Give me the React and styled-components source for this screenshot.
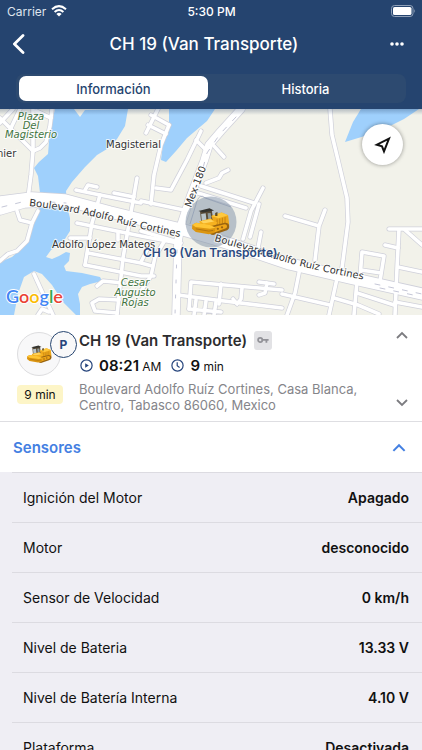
import React, { useState } from "react";
import styled, { createGlobalStyle } from "styled-components";

const GlobalStyle = createGlobalStyle`
  * { box-sizing: border-box; }
  body { margin: 0; font-family: Inter, "Liberation Sans", sans-serif; background: #efeef4; color: #111; }
  button { font: inherit; color: inherit; border: 0; padding: 0; margin: 0; background: none; cursor: pointer; }
  svg { display: block; }
`;

const Screen = styled.div`
  height: 100vh;
  display: flex;
  flex-direction: column;
  overflow: hidden;
`;

const Header = styled.header`
  flex: none;
  background: #25446f;
  color: #fff;
`;

const StatusBar = styled.div`
  display: grid;
  grid-template-columns: 1fr auto 1fr;
  align-items: center;
  height: 22px;
  padding: 0 6px 0 7px;
  font-size: 12px;
`;

const Carrier = styled.span`
  display: flex;
  align-items: center;
  gap: 5px;
  color: #dfe5ee;
`;

const Clock = styled.span`
  font-weight: 500;
`;

const BatterySlot = styled.span`
  justify-self: end;
`;

const NavBar = styled.div`
  display: grid;
  grid-template-columns: 40px 1fr 48px;
  align-items: center;
  height: 44px;
  padding: 0 12px 0 6px;
`;

const NavButton = styled.button`
  display: flex;
  align-items: center;
  justify-content: ${(p) => (p.$end ? "flex-end" : "flex-start")};
  height: 44px;
  padding: 0 6px;
`;

const Title = styled.h1`
  margin: 0;
  text-align: center;
  font-size: 17px;
  font-weight: 500;
  line-height: 24px;
`;

const Segments = styled.div`
  display: flex;
  margin: 8px 16px 6px;
  padding: 2px 3px;
  height: 29px;
  border-radius: 8px;
  background: #2d4a70;
`;

const Segment = styled.button`
  flex: ${(p) => (p.$active ? "1 1 0" : "1 1 6px")};
  border-radius: 7px;
  font-size: 13px;
  font-weight: 500;
  background: ${(p) => (p.$active ? "#fff" : "transparent")};
  color: ${(p) => (p.$active ? "#25446f" : "#fff")};
`;

const MapArea = styled.section`
  position: relative;
  flex: none;
  height: 206px;
`;

const LocateButton = styled.button`
  position: absolute;
  top: 15px;
  right: 19px;
  width: 41px;
  height: 41px;
  display: grid;
  place-items: center;
  border-radius: 50%;
  background: #fff;
  box-shadow: 0 0 4px rgba(0, 0, 0, 0.4);
`;

const UnitCard = styled.section`
  flex: none;
  display: grid;
  grid-template-columns: 50px 1fr 24px;
  column-gap: 12px;
  padding: 15px 8px 8px 17px;
  background: #fff;
  border-bottom: 1px solid #dedee2;
`;

const UnitAside = styled.div`
  display: flex;
  flex-direction: column;
  align-items: flex-start;
  gap: 9px;
  padding-top: 2px;
`;

const Avatar = styled.div`
  position: relative;
  display: grid;
  place-items: center;
  width: 44px;
  height: 44px;
  border: 1px solid #dddddf;
  border-radius: 50%;
  background: #f8f8f9;
`;

const ParkedBadge = styled.span`
  position: absolute;
  top: -2px;
  right: -17px;
  width: 27px;
  height: 27px;
  display: grid;
  place-items: center;
  border: 1px solid #25446f;
  border-radius: 50%;
  background: #f8f8f9;
  color: #25447c;
  font-size: 12px;
  font-weight: 700;
`;

const DurationTag = styled.span`
  width: 46px;
  height: 19px;
  border-radius: 4px;
  background: #fdf5c7;
  font-size: 12px;
  line-height: 19px;
  text-align: center;
`;

const UnitBody = styled.div`
  min-width: 0;
`;

const UnitName = styled.h2`
  display: flex;
  align-items: center;
  gap: 7px;
  margin: 0;
  height: 20px;
  font-size: 15px;
  font-weight: 600;
  color: #2c2c2e;
`;

const KeyTag = styled.span`
  display: grid;
  place-items: center;
  width: 18px;
  height: 19px;
  border-radius: 3px;
  background: #e2e2e5;
`;

const Times = styled.div`
  display: flex;
  align-items: center;
  gap: 10px;
  height: 20px;
  margin-top: 5px;
  padding-left: 1px;
`;

const TimeItem = styled.span`
  display: flex;
  align-items: center;
  gap: 6px;
  font-size: 12px;
`;

const TimeValue = styled.strong`
  font-size: 15px;
  font-weight: 600;
`;

const Address = styled.p`
  margin: 6px 0 0;
  font-size: 13px;
  line-height: 16px;
  color: #85858a;
`;

const Steppers = styled.div`
  display: flex;
  flex-direction: column;
  justify-content: space-between;
  align-items: center;
  padding-bottom: 5px;
`;

const Stepper = styled.button`
  display: grid;
  place-items: center;
  width: 24px;
  height: 10px;
`;

const Group = styled.section`
  flex: 1;
  min-height: 0;
  display: flex;
  flex-direction: column;
`;

const GroupToggle = styled.button`
  flex: none;
  display: flex;
  align-items: center;
  justify-content: space-between;
  height: 50px;
  padding: 0 16px 0 13px;
  background: #fff;
  color: #4480e2;
  font-size: 15px;
  font-weight: 600;
`;

const SensorList = styled.dl`
  flex: 1;
  min-height: 0;
  margin: 0;
  padding-left: 12px;
  overflow-y: auto;
  scrollbar-width: none;
  background: #efeef4;
`;

const SensorRow = styled.div`
  display: flex;
  align-items: center;
  justify-content: space-between;
  height: 50px;
  padding: 0 13px 0 11px;
  border-top: 1px solid #dcdbe1;
  font-size: 14px;
`;

const SensorName = styled.dt``;

const SensorValue = styled.dd`
  margin: 0;
  font-weight: 600;
`;

const sensors = [
  ["Ignición del Motor", "Apagado"],
  ["Motor", "desconocido"],
  ["Sensor de Velocidad", "0 km/h"],
  ["Nivel de Bateria", "13.33 V"],
  ["Nivel de Batería Interna", "4.10 V"],
  ["Plataforma", "Desactivada"],
];

function Bulldozer(props) {
  return (
    <svg viewBox="0 0 100 72" aria-hidden="true" {...props}>
      <path d="M21 8 L52 5 L57 36 L25 42 Z" fill="#594b37" />
      <path d="M24 15 L36 13 L38 31 L26 34 Z" fill="#b8c3c9" />
      <path d="M41 13 L49 12 L51 29 L43 30 Z" fill="#8f9a9c" />
      <path d="M17 7 L46 0 L58 6 L29 11 Z" fill="#34332f" />
      <path d="M51 20 L78 11 L95 18 L98 43 L61 50 Z" fill="#eda71b" />
      <path d="M51 20 L78 11 L95 18 L70 26 Z" fill="#ffc83d" />
      <path d="M66 29 V46 M73 27 V45 M80 25 V43 M87 23 V41" stroke="#b9780f" strokeWidth="2" />
      <path d="M61 12 L67 10 V20 H61 Z" fill="#5d4a25" />
      <path d="M19 34 L49 27 L67 38 L58 48 L25 47 Z" fill="#f6b11f" />
      <path d="M23 34 L48 29 L58 35 L30 40 Z" fill="#ffd35c" />
      <path d="M45 48 L86 38 Q99 38 98 49 Q98 56 88 59 L56 70 Q46 70 44 61 Z" fill="#9a6510" />
      <path d="M49 51 L86 42 Q93 43 92 49 Q92 52 86 54 L57 64 Q49 64 49 58 Z" fill="#efa518" />
      <g fill="#9a6510"><circle cx="57" cy="57" r="3" /><circle cx="68" cy="54" r="3" /><circle cx="79" cy="50" r="3" /></g>
      <path d="M1 43 L11 38 L46 43 L62 51 L58 65 L44 68 L10 62 L0 54 Z" fill="#dc9611" />
      <path d="M1 43 L11 38 L46 43 L62 51 L47 54 L9 49 Z" fill="#ffc534" />
      <path d="M10 54 L44 60 L56 58" fill="none" stroke="#a66c10" strokeWidth="2" />
    </svg>
  );
}

const water = [
  "M55 109 H74 L80 117 L85 110 L128 109 L125 126 L117 139 L107 149 L97 155 L85 167 L72 182 L66 191 L67 206 L70 218 L70 231 L63 242 L51 250 L46 257 L52 259 L59 256 L66 252 L70 253 L69 261 L64 266 L66 271 L82 273 L100 277 L102 281 L90 284 L82 287 L78 294 L80 304 L80 316 H0 V262 L12 257 L21 249 L29 238 L32 224 L39 208 L40 193 L38 176 L34 168 L39 162 L48 154 L50 130 Z",
  "M169 109 H215 L207 121 L187 138 L176 151 L166 162 L161 160 L163 144 L169 126 Z",
  "M345 142 L353 122 L361 109 H419 L404 119 L378 132 Z",
];

const streets = [
  "M0 118 L20 138 L33 151 L31 175 L28 198",
  "M52 109 L50 126 L46 142 L40 148 L33 151",
  "M33 109 V151",
  "M20 109 L10 130 M0 123 L13 109 M36 111 L51 118",
  "M17 211 L20 220 L32 223 L38 211",
  "M32 223 L27 241 L17 251 L8 254 L0 261",
  "M76 190 L100 195 L141 203",
  "M85 190 L88 185 L97 187",
  "M100 195 L92 223 L85 265",
  "M137 178 L133 201 L123 258 L117 315",
  "M77 223 L141 236 L178 243",
  "M70 238 L90 238 M118 233 V240",
  "M88 253 L141 263 L152 266",
  "M85 265 L141 276 L154 276",
  "M114 193 L134 197",
  "M97 286 L103 281 L123 283",
  "M119 300 L99 299 L92 303 L95 311 L117 313",
  "M34 274 L44 296 L53 315",
  "M38 315 L42 309 L49 312",
  "M201 131 L187 160 L171 190 L156 188",
  "M158 109 L146 133 M151 115 L169 125 M148 125 L166 134",
  "M169 125 L161 145 L154 175 L151 204",
  "M141 201 L184 210",
  "M196 140 L207 151 M214 146 L224 157",
  "M206 183 L219 178 L222 173 L228 170",
  "M201 186 L254 203 M198 193 L246 208",
  "M263 188 L251 211 L243 239 M259 204 L250 237 M261 232 L258 248",
  "M165 240 L155 257 L151 276 L141 291",
  "M141 231 L181 243 M150 244 L141 262",
  "M189 309 L191 282 L282 290",
  "M221 284 L219 304 M178 295 L216 300 L282 308",
  "M196 300 L194 315 M206 301 L204 315 M216 302 L214 315 M189 309 L221 312",
  "M233 299 L237 304 L241 299 L242 288",
  "M259 282 L274 284 M267 283 L265 293 L259 295",
  "M330 109 L332 135 L338 160 L347 198 L348 222 L342 268",
  "M338 274 L329 315",
  "M285 216 L319 226 M325 210 L319 226 L315 260",
  "M360 278 L362 252 L384 256 L380 281 M361 270 L381 273",
  "M389 229 H422 M399 229 L397 268 L395 315",
  "M405 230 L422 245 M385 245 L398 248 M398 267 L422 272",
  "M300 268 L295 293 L287 315",
  "M282 294 L330 305 M357 281 L354 315",
  "M357 293 L394 305 M334 298 L358 305 L379 314",
  "M395 302 L422 307",
];

const avenues = [
  "M0 211 L24 204 L60 202",
  "M241 109 L221 131 L209 145 L204 161 L191 195 L181 225 L178 241 L176 315",
];

const boulevard = "M0 202 L32 198 L65 200 L110 212 L180 229 L215 239 L290 264 L350 278 L422 294";

function CityMap() {
  return (
    <svg
      width="100%"
      height="100%"
      viewBox="0 109 422 206"
      preserveAspectRatio="xMidYMid slice"
      role="img"
      aria-label="Mapa"
    >
      <defs>
        <path id="blvd-west" d="M29 206 Q78 211 125 225 Q155 232 195 240" />
        <path id="blvd-east" d="M214 241 Q250 251 285 262 Q325 273 382 283" />
        <path id="mex" d="M191 208 L209 160" />
        <linearGradient id="top-shade" x1="0" y1="0" x2="0" y2="1">
          <stop offset="0" stopColor="#1d355a" stopOpacity="0.28" />
          <stop offset="1" stopColor="#1d355a" stopOpacity="0" />
        </linearGradient>
      </defs>
      <rect y="109" width="422" height="206" fill="#f2f2ea" />
      {water.map((d) => <path key={d} d={d} fill="#9fd0fc" />)}
      <path d="M34 271 L24 277 L18 294 L14 315 H76 L63 302 L52 285 L42 274 Z" fill="#f2f2ea" />
      <g fill="none" strokeLinecap="round" strokeLinejoin="round">
        <g stroke="#cfd0da">
          {streets.map((d) => <path key={d} d={d} strokeWidth="5" />)}
          {avenues.map((d) => <path key={d} d={d} strokeWidth="9" />)}
          <path d={boulevard} strokeWidth="13" />
        </g>
        <g stroke="#fff">
          {streets.map((d) => <path key={d} d={d} strokeWidth="3.6" />)}
          {avenues.map((d) => <path key={d} d={d} strokeWidth="7.6" />)}
          <path d={boulevard} strokeWidth="11.4" />
        </g>
        <g stroke="#b5b7cb" strokeWidth="0.8" strokeDasharray="5 9">
          <path d="M2 207 L26 201 M50 202 L66 203" />
          <path d="M236 117 L220 134 L207 153 L203 168" />
          <path d="M375 284 L422 294 M380 288 L418 296" />
          <path d="M177 250 L175 315" strokeDasharray="3 12" />
        </g>
      </g>
      <circle cx="211" cy="222" r="25.5" fill="#8797ac" fillOpacity="0.55" />
      <path d="M190 224 L197 201 Q200 193 205 198 L231 207" fill="none" stroke="#6e80a0" strokeWidth="0.7" opacity="0.6" />
      <Bulldozer x="192" y="208" width="38" height="28" />
      <g fontFamily='"DejaVu Sans", "Noto Sans", sans-serif' fontSize="10" fill="#333" stroke="#fff" strokeWidth="2" strokeOpacity="0.75" paintOrder="stroke">
        <text x="106" y="148">Magisterial</text>
        <text x="-3" y="157">nier</text>
        <text x="52" y="248">Adolfo López Mateos</text>
        <g fontStyle="italic" fill="#3f7440" textAnchor="middle">
          <text x="31" y="120">Plaza</text>
          <text x="31" y="129">Del</text>
          <text x="31" y="138">Magisterio</text>
          <text x="135" y="286">Cesar</text>
          <text x="135" y="296">Augusto</text>
          <text x="135" y="306">Rojas</text>
        </g>
        <text><textPath href="#blvd-west">Boulevard Adolfo Ruíz Cortines</textPath></text>
        <text><textPath href="#blvd-east">Boulevard Adolfo Ruíz Cortines</textPath></text>
        <text><textPath href="#mex">Mex-180</textPath></text>
      </g>
      <text x="143" y="257" fontFamily="Inter, sans-serif" fontSize="12" fontWeight="600" fill="#2c4a80" stroke="#fff" strokeWidth="1.5" strokeOpacity="0.6" paintOrder="stroke">
        CH 19 (Van Transporte)
      </text>
      <text x="6" y="303" fontFamily='Lato, sans-serif' fontSize="18" fontWeight="600" stroke="#fff" strokeWidth="2" paintOrder="stroke">
        <tspan fill="#4285f4">G</tspan><tspan fill="#ea4335">o</tspan><tspan fill="#fbbc05">o</tspan><tspan fill="#4285f4">g</tspan><tspan fill="#34a853">l</tspan><tspan fill="#ea4335">e</tspan>
      </text>
      <rect y="109" width="422" height="6" fill="url(#top-shade)" />
    </svg>
  );
}

function Chevron({ up, color, width = 12 }) {
  return (
    <svg width={width} height={width / 2 + 2} viewBox="0 0 12 8" fill="none" stroke={color} strokeWidth="1.8" aria-hidden="true">
      <path d={up ? "M1 7 L6 2 L11 7" : "M1 1 L6 6 L11 1"} />
    </svg>
  );
}

export default function App() {
  const [tab, setTab] = useState("Información");
  const [open, setOpen] = useState(true);

  return (
    <Screen>
      <GlobalStyle />
      <Header>
        <StatusBar>
          <Carrier>
            Carrier
            <svg width="16" height="12" viewBox="0 0 16 12" fill="none" stroke="#fff" strokeWidth="2" aria-hidden="true">
              <path d="M1 4.2 Q8 -2 15 4.2" />
              <path d="M3.6 7 Q8 3 12.4 7" />
              <path d="M8 11.6 L5.4 8.9 Q8 6.8 10.6 8.9 Z" fill="#fff" stroke="none" />
            </svg>
          </Carrier>
          <Clock>5:30 PM</Clock>
          <BatterySlot>
            <svg width="25" height="12" viewBox="0 0 25 12" aria-hidden="true">
              <rect x="0.5" y="0.5" width="21.5" height="11" rx="3" fill="none" stroke="#8fa0b8" />
              <rect x="2" y="2" width="18.5" height="8" rx="1.6" fill="#fff" />
              <path d="M23.3 4 Q25 6 23.3 8 Z" fill="#8fa0b8" />
            </svg>
          </BatterySlot>
        </StatusBar>
        <NavBar>
          <NavButton aria-label="Atrás">
            <svg width="13" height="20" viewBox="0 0 13 20" fill="none" stroke="#fff" strokeWidth="2.8" strokeLinecap="round" strokeLinejoin="round" aria-hidden="true">
              <path d="M11 1.6 L2.4 10 L11 18.4" />
            </svg>
          </NavButton>
          <Title>CH 19 (Van Transporte)</Title>
          <NavButton $end aria-label="Más opciones">
            <svg width="14" height="4" viewBox="0 0 14 4" fill="#fff" aria-hidden="true">
              <circle cx="2" cy="2" r="1.8" />
              <circle cx="7" cy="2" r="1.8" />
              <circle cx="12" cy="2" r="1.8" />
            </svg>
          </NavButton>
        </NavBar>
        <Segments role="tablist">
          {["Información", "Historia"].map((name) => (
            <Segment key={name} role="tab" aria-selected={tab === name} $active={tab === name} onClick={() => setTab(name)}>
              {name}
            </Segment>
          ))}
        </Segments>
      </Header>

      <MapArea>
        <CityMap />
        <LocateButton aria-label="Centrar en el mapa">
          <svg width="18" height="18" viewBox="0 0 18 18" fill="none" stroke="#111" strokeWidth="2" strokeLinejoin="miter" aria-hidden="true">
            <path d="M15 2.6 L2.8 8.7 L8 10.3 L10 15.4 Z" />
          </svg>
        </LocateButton>
      </MapArea>

      <UnitCard>
        <UnitAside>
          <Avatar>
            <Bulldozer width="25" height="19" />
            <ParkedBadge>P</ParkedBadge>
          </Avatar>
          <DurationTag>9 min</DurationTag>
        </UnitAside>
        <UnitBody>
          <UnitName>
            CH 19 (Van Transporte)
            <KeyTag>
              <svg width="12" height="8" viewBox="0 0 12 8" fill="none" stroke="#929298" strokeWidth="1.8" aria-hidden="true">
                <circle cx="3.2" cy="4" r="2.1" />
                <path d="M5.4 3.8 H11.6 M9.4 4 V6.8" />
              </svg>
            </KeyTag>
          </UnitName>
          <Times>
            <TimeItem>
              <svg width="13" height="13" viewBox="0 0 13 13" fill="none" stroke="#25447c" strokeWidth="1.2" aria-hidden="true">
                <circle cx="6.5" cy="6.5" r="5.6" />
                <path d="M5.2 4.2 L8.8 6.5 L5.2 8.8 Z" fill="#25447c" stroke="none" />
              </svg>
              <span><TimeValue>08:21</TimeValue> AM</span>
            </TimeItem>
            <TimeItem>
              <svg width="13" height="13" viewBox="0 0 13 13" fill="none" stroke="#25447c" strokeWidth="1.2" aria-hidden="true">
                <circle cx="6.5" cy="6.5" r="5.6" />
                <path d="M6.2 3.2 V6.7 L8.6 8.4" />
              </svg>
              <span><TimeValue>9</TimeValue> min</span>
            </TimeItem>
          </Times>
          <Address>Boulevard Adolfo Ruíz Cortines, Casa Blanca, Centro, Tabasco 86060, Mexico</Address>
        </UnitBody>
        <Steppers>
          <Stepper aria-label="Unidad anterior"><Chevron up color="#7c7c80" /></Stepper>
          <Stepper aria-label="Unidad siguiente"><Chevron color="#7c7c80" /></Stepper>
        </Steppers>
      </UnitCard>

      <Group>
        <GroupToggle aria-expanded={open} onClick={() => setOpen(!open)}>
          Sensores
          <Chevron up={open} color="#4480e2" width={14} />
        </GroupToggle>
        <SensorList>
          {open && sensors.map(([name, value]) => (
            <SensorRow key={name}>
              <SensorName>{name}</SensorName>
              <SensorValue>{value}</SensorValue>
            </SensorRow>
          ))}
        </SensorList>
      </Group>
    </Screen>
  );
}
